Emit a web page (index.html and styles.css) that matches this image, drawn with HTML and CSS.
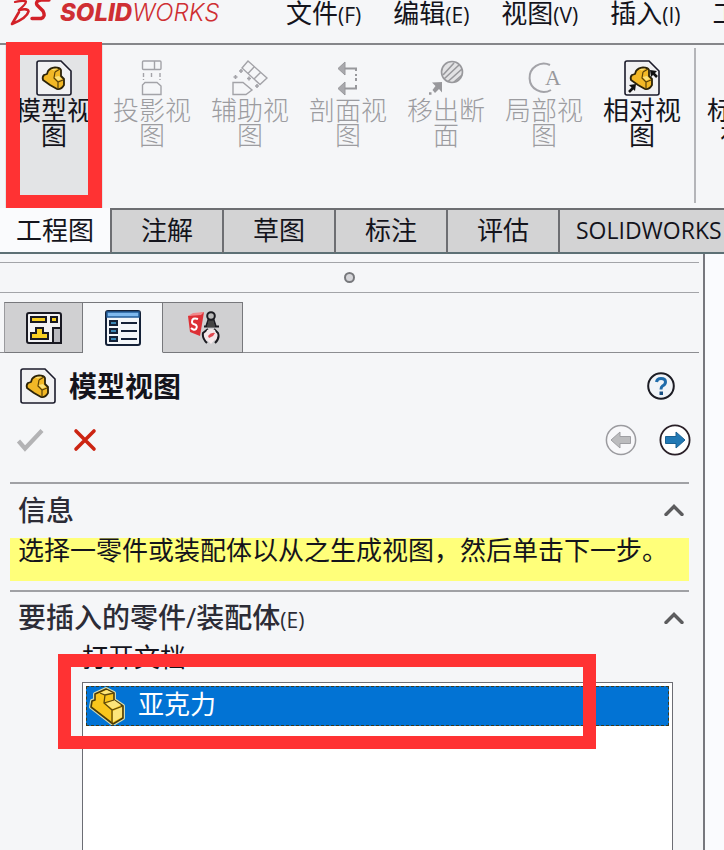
FILE: index.html
```html
<!DOCTYPE html>
<html lang="zh-CN">

<head>
  <meta charset="UTF-8">
  <meta name="viewport" content="width=device-width, initial-scale=1.0">
  <title>SOLIDWORKS - 模型视图</title>
  <link rel="stylesheet" href="styles.css">
</head>

<body>
  <!-- Shared icon shapes -->
  <svg class="sprite" aria-hidden="true">
    <symbol id="model-view" viewBox="0 0 36 36">
      <path d="M3 1H25L35 11V33Q35 35 33 35H3Q1 35 1 33V3Q1 1 3 1Z" fill="#f1f1f3" stroke="#1b1b2b" stroke-width="1.6" />
      <path d="M12 11Q14 8 19 7.500Q24 7.500 25 10V16L28 19V25Q25 30 21 29L14 25L7 20Q6 17 8 15L11 14Z" fill="#f2b826" stroke="#2b2208" stroke-width="1.8" stroke-linejoin="round" />
      <path d="M19 12L24 9M19 12L18 18L22 22L27 20M22 22V28" fill="none" stroke="#5a4208" stroke-width="1.200" />
      <path d="M15 9.500Q18 8 22 8.500L18 10.500ZM18.500 17L23 16L26 19L22 20.500Z" fill="#fbe17a" />
    </symbol>
    <symbol id="chevron" viewBox="0 0 20 12">
      <path d="M2 10.500L10 2.500L18 10.500" fill="none" stroke="#5c5c5e" stroke-width="3.400" stroke-linecap="round" />
    </symbol>
  </svg>

  <header class="title-bar">
    <div class="brand">
      <svg class="brand-mark" viewBox="0 0 42 26" aria-hidden="true">
        <g fill="none" stroke="#d22128" stroke-linecap="round" stroke-linejoin="round">
          <path d="M6 2Q15 0 17 1.500Q17 4 11 9" stroke-width="2.200" />
          <path d="M10 10Q19 8 19.500 11.500Q18 18 3 24L10 12" stroke-width="2.600" />
          <path d="M40 0H32Q26 1 28 5L34 11Q37 17 32 18.500H23" stroke-width="3.400" />
        </g>
      </svg>
      <span class="brand-name"><b>SOLID</b>WORKS</span>
    </div>
    <nav class="menu">
      <a href="#">文件<small>(F)</small></a>
      <a href="#">编辑<small>(E)</small></a>
      <a href="#">视图<small>(V)</small></a>
      <a href="#">插入<small>(I)</small></a>
      <a href="#">工具<small>(T)</small></a>
    </nav>
  </header>

  <div class="ribbon">
    <div class="tool-wrap">
      <button class="tool pressed" type="button">
        <svg class="icon"><use href="#model-view" /></svg>
        <span>模型视图</span>
      </button>
      <div class="callout callout-tool"></div>
    </div>
    <button class="tool" type="button" disabled>
      <svg class="icon" viewBox="0 0 36 36" fill="none" stroke="#a3a3a8" stroke-width="1.400">
        <rect x="8.500" y="1" width="18.500" height="8.500" rx="1" />
        <path d="M20.500 1V9.500M9.500 13V17M17.500 13V17M26 13V17M9.500 19V20M26 19V20" />
        <path d="M11 22.500H23L27 26V34.500H8.500V25Z" />
      </svg>
      <span>投影视图</span>
    </button>
    <button class="tool" type="button" disabled>
      <svg class="icon" viewBox="0 0 36 36" fill="none" stroke="#a3a3a8" stroke-width="1.400">
        <path d="M16 1L35 18L28 24.500L10 8ZM22.500 6.500L16 13.500M29 12L22 19" />
        <path d="M1 22.500H11L20 30L14 34.500H1Z" />
        <path d="M7 11H11M9 9V13M1.500 17H5.500M3.500 15V19M15 18.500H19M17 16.500V20.500M23 26H27M25 24V28" stroke-width="1.600" />
      </svg>
      <span>辅助视图</span>
    </button>
    <button class="tool" type="button" disabled>
      <svg class="icon" viewBox="0 0 36 36" fill="none" stroke="#98989c" stroke-width="2">
        <path d="M14 8.500H26V11M26 14V16M26 18V21M26 25V28.500H14" />
        <path d="M8 8.500L15 2V15ZM8 28.500L15 22V35Z" fill="#a9a9ad" stroke-width="1" />
      </svg>
      <span>剖面视图</span>
    </button>
    <button class="tool" type="button" disabled>
      <svg class="icon" viewBox="0 0 36 36" fill="none" stroke="#98989c" stroke-width="1.600">
        <circle cx="24" cy="12" r="10.500" fill="#e2e2e4" />
        <path d="M15 15L26 3M16 19L31 5M20 21.500L34 9M26 22L34 15" />
        <path d="M4 22.500L14 22V32.500L11 29L7 33L4.500 30L7.500 26Z" fill="#98989c" stroke="none" />
        <path d="M1 33.500H3.500" stroke-width="2.500" />
      </svg>
      <span>移出断面</span>
    </button>
    <button class="tool" type="button" disabled>
      <svg class="icon" viewBox="0 0 36 36">
        <path d="M24 5A14.200 14.200 0 1 0 25 30" fill="none" stroke="#a3a3a8" stroke-width="2" />
        <text class="detail-letter" x="27" y="25" text-anchor="middle">A</text>
      </svg>
      <span>局部视图</span>
    </button>
    <button class="tool" type="button">
      <svg class="icon" viewBox="0 0 36 36">
        <use href="#model-view" width="36" height="36" />
        <path d="M5 32L10 27M33 17L29 13" stroke="#111" stroke-width="2.600" />
        <path d="M12 24L11 31L5 25ZM26 10L33 11L27 17Z" fill="#111" />
      </svg>
      <span>相对视图</span>
    </button>
    <div class="ribbon-divider"></div>
    <button class="tool" type="button">
      <svg class="icon" viewBox="0 0 36 36"></svg>
      <span>标准三视图</span>
    </button>
  </div>

  <nav class="tabs">
    <button class="tab active" type="button">工程图</button>
    <button class="tab" type="button">注解</button>
    <button class="tab" type="button">草图</button>
    <button class="tab" type="button">标注</button>
    <button class="tab" type="button">评估</button>
    <button class="tab addins" type="button">SOLIDWORKS</button>
  </nav>

  <div class="workspace">
    <main class="panel">
      <div class="grip"><span class="grip-dot"></span></div>

      <div class="panel-tabs">
        <button class="panel-tab" type="button" aria-label="特征树">
          <svg class="icon" viewBox="0 0 36 36" stroke="#191922" stroke-width="2">
            <rect x="1" y="3" width="34" height="30" rx="2" fill="#f2f2f4" />
            <path d="M5 7H20V12H5ZM25 7H31V12H25Z" fill="#f8cf22" />
            <path d="M5 29V23H10V18H17V23H22V29Z" fill="#f8cf22" />
            <path d="M27 33V18H35V33Z" fill="#b9b9bf" />
          </svg>
        </button>
        <button class="panel-tab active" type="button" aria-label="属性">
          <svg class="icon" viewBox="0 0 36 36" stroke="#152238" stroke-width="2">
            <rect x="1" y="1" width="34" height="34" rx="2" fill="#f4f7fa" />
            <path d="M2 2H34V7H2Z" fill="#7fb9ee" stroke="#235d9a" stroke-width="1.500" />
            <path d="M5 11H12V15H5ZM5 19H12V23H5ZM5 27H12V31H5Z" fill="#3b87b5" />
            <path d="M16 13H32M16 21H32M16 29H32" stroke-width="1.800" />
          </svg>
        </button>
        <button class="panel-tab" type="button" aria-label="配置">
          <svg class="icon" viewBox="0 0 36 36">
            <path d="M3 6L19 2L15 26L5 22Z" fill="#dd3036" />
            <path d="M3 6L8 3L19 2L16 5Z" fill="#f08a8d" />
            <path d="M13 9Q7 7 7 12Q7 14 10 14.500Q13 16 11 19Q9 21 6 18" fill="none" stroke="#fff" stroke-width="2" />
            <path d="M23 19L18 23Q17 28 22 33M29 19L33 23Q35 28 30 33" fill="#f4e9eb" stroke="#1c1c22" stroke-width="2" />
            <path d="M22 20Q26 18 30 20L32 27L26 34L20 28Z" fill="#f4e9eb" />
            <path d="M23 26Q26 22 30 23L28 26L24 28Z" fill="#e14850" />
            <path d="M19 16.500H34M24 8L21 17M28 8L31 17" stroke="#1c1c22" stroke-width="2" />
            <path d="M24 9H28L30 17H22Z" fill="#444" />
            <circle cx="26" cy="6" r="3.800" fill="#bbb" stroke="#1c1c22" stroke-width="2" />
          </svg>
        </button>
      </div>

      <div class="panel-head">
        <svg class="icon"><use href="#model-view" /></svg>
        <h1>模型视图</h1>
        <button class="icon-btn help" type="button" aria-label="帮助">
          <svg viewBox="0 0 28 28">
            <circle cx="14" cy="14" r="12.800" fill="#f1f4f8" stroke="#1c1c24" stroke-width="2" />
            <path d="M9.500 10Q10 6.500 14 6.500Q18.500 6.500 18.500 10Q18.500 12.500 15.500 14Q14 15 14 17.500" fill="none" stroke="#1f6cab" stroke-width="3" />
            <path d="M12.500 19.500H16V23H12.500Z" fill="#174f83" />
          </svg>
        </button>
      </div>

      <div class="panel-actions">
        <button class="icon-btn" type="button" aria-label="确定" disabled>
          <svg viewBox="0 0 28 24"><path d="M2.500 13L9 20.500L26 2.500" fill="none" stroke="#b3b3b5" stroke-width="4.200" /></svg>
        </button>
        <button class="icon-btn cancel" type="button" aria-label="取消">
          <svg viewBox="0 0 24 24"><path d="M3 3L21 21M21 3L3 21" stroke="#cc2412" stroke-width="3.600" stroke-linecap="round" /></svg>
        </button>
        <button class="icon-btn round back" type="button" aria-label="上一步" disabled>
          <svg viewBox="0 0 32 32">
            <circle cx="16" cy="16" r="14.600" fill="#f8f8fa" stroke="#9b9b9f" stroke-width="1.500" />
            <path d="M6 16L15 8V12.500H25.500V19.500H15V24Z" fill="#bcbcbe" stroke="#9f9fa3" />
          </svg>
        </button>
        <button class="icon-btn round" type="button" aria-label="下一步">
          <svg viewBox="0 0 32 32">
            <circle cx="16" cy="16" r="14.600" fill="#fff" stroke="#2a2028" stroke-width="1.800" />
            <path d="M26 16L17 8V12.500H6.500V19.500H17V24Z" fill="#2279b5" stroke="#1a6192" />
          </svg>
        </button>
      </div>

      <section class="group">
        <button class="group-head" type="button">
          <span>信息</span>
          <svg class="chevron"><use href="#chevron" /></svg>
        </button>
        <p class="message">选择一零件或装配体以从之生成视图，然后单击下一步。</p>
      </section>

      <section class="group parts">
        <button class="group-head" type="button">
          <span>要插入的零件/装配体<small>(E)</small></span>
          <svg class="chevron"><use href="#chevron" /></svg>
        </button>
        <div class="documents">
          <div class="list-label" id="open-docs">打开文档</div>
          <ul class="doc-list" role="listbox" aria-labelledby="open-docs">
            <li class="doc" role="option" aria-selected="true">
              <svg class="part-icon" viewBox="0 0 36 38">
                <path d="M3 14L6 13V7L17 2L25 6V13L34 19V31L24 37L2 20Z" fill="#f6c21c" stroke="#d4dcae" stroke-width="4" stroke-linejoin="round" />
                <path d="M3 14L6 13V7L17 2L25 6V13L34 19V31L24 37L2 20Z" fill="#f9c61c" stroke="#4b3b08" stroke-width="1.600" stroke-linejoin="round" />
                <path d="M11 6L18 3L24 6L16 8ZM24 24L33 20V30L24 35ZM17 17L25 13L32 18L24 22Z" fill="#fde57a" />
                <path d="M11 6L16 8L25 6M16 8L15 16L23 23L34 19M23 23V36M15 16L25 13" fill="none" stroke="#5d490c" stroke-width="1.300" />
              </svg>
              <span>亚克力</span>
            </li>
          </ul>
          <div class="callout callout-doc"></div>
        </div>
      </section>
    </main>
    <div class="canvas"></div>
  </div>
</body>

</html>
```

FILE: styles.css
```css
* {
  box-sizing: border-box;
}

body {
  margin: 0;
  height: 100vh;
  display: flex;
  flex-direction: column;
  overflow: hidden;
  background: #f5f6f8;
  color: #14141c;
  font-family: "Open Sans", "Noto Sans CJK SC", sans-serif;
  font-size: 26px;
  line-height: 32px;
}

button {
  padding: 0;
  border: none;
  background: none;
  color: inherit;
  font: inherit;
  cursor: pointer;
}

small {
  font-size: 21px;
}

.sprite {
  display: none;
}

.icon {
  display: block;
  flex: none;
  width: 36px;
  height: 36px;
}

/* Title bar */
.title-bar {
  display: flex;
  flex: none;
  height: 45px;
  padding-left: 9px;
  border-bottom: 2px solid #85868a;
  overflow: hidden;
  white-space: nowrap;
}

.brand {
  display: flex;
  flex: none;
  gap: 9px;
  width: 277px;
}

.brand-mark {
  width: 42px;
  height: 26px;
}

.brand-name {
  color: #cf2f33;
  font-family: Inter, sans-serif;
  font-size: 24px;
  font-style: italic;
  font-weight: 300;
  line-height: 26px;
}

.brand-name b {
  font-weight: 800;
}

.menu {
  display: flex;
  gap: 32px;
  line-height: 26px;
}

.menu a {
  color: inherit;
  text-decoration: none;
}

/* Ribbon */
.ribbon {
  display: flex;
  flex: none;
  height: 163px;
  padding-left: 5px;
  overflow-x: clip;
}

.tool-wrap {
  position: relative;
  flex: none;
}

.tool {
  display: flex;
  flex: none;
  flex-direction: column;
  align-items: center;
  gap: 2px;
  width: 98px;
  height: 100%;
  padding: 15px 8px 0;
  line-height: 25px;
}

.tool span {
  width: 80px;
}

.tool:disabled {
  color: #9c9ca0;
  font-weight: 300;
}

.tool.pressed {
  background: #e3e4e6;
}

.detail-letter {
  fill: #98989c;
  font: 22px "Liberation Serif", serif;
}

.ribbon-divider {
  flex: none;
  width: 2px;
  margin: 3px 1px 5px 3px;
  background: #b4b5b9;
}

.callout {
  position: absolute;
  border: 13px solid #ff3233;
  pointer-events: none;
}

.callout-tool {
  inset: -3px 1px 0;
  border-width: 13px 14px;
}

.callout-doc {
  top: 10px;
  right: 77px;
  left: -24px;
  height: 95px;
}

/* Command tabs */
.tabs {
  display: flex;
  flex: none;
  height: 46px;
}

.tab {
  flex: none;
  width: 112px;
  padding-bottom: 2px;
  border: solid #6d6e72;
  border-width: 2px 0 2px 2px;
  border-bottom-color: #5d7075;
  background: #d3d3d4;
  white-space: nowrap;
}

.tab.active {
  width: 110px;
  border-top-color: transparent;
  border-left: none;
  background: #fafbfd;
}

.tab.addins {
  flex: 1;
  min-width: 0;
  padding-left: 16px;
  font-size: 23px;
  text-align: left;
}

/* Property panel */
.workspace {
  display: flex;
  flex: 1;
  min-height: 0;
}

.panel {
  display: flex;
  flex: 1;
  flex-direction: column;
  padding: 8px 4px 0 0;
  border-right: 2px solid #77787e;
}

.canvas {
  width: 19px;
  background: #fafbfe;
}

.grip {
  display: flex;
  flex: none;
  align-items: center;
  justify-content: center;
  height: 31px;
  border: solid #a3a4a8;
  border-width: 1px 0;
}

.grip-dot {
  width: 11px;
  height: 11px;
  border: 2px solid #77787c;
  border-radius: 50%;
  background: #d6d6da;
}

.panel-tabs {
  display: flex;
  flex: none;
  height: 60px;
  padding: 9px 0 0 4px;
  border-bottom: 1px solid #8c8d91;
}

.panel-tab {
  display: flex;
  align-items: center;
  justify-content: center;
  width: 80px;
  height: 51px;
  border: 1px solid #77787c;
  border-left: none;
  background: #d0d0d2;
}

.panel-tab:first-child {
  width: 79px;
  border-left: 1px solid #9a9a9e;
}

.panel-tab.active {
  border-bottom-color: #f5f6f8;
  background: #f5f6f8;
}

.panel-head {
  display: flex;
  align-items: center;
  gap: 13px;
  padding: 15px 24px 0 20px;
}

.panel-head h1 {
  margin: 0;
  font-size: 28px;
  font-weight: 700;
  line-height: 36px;
}

.icon-btn svg {
  display: block;
  width: 28px;
  height: 24px;
}

.help {
  margin-left: auto;
}

.icon-btn.help svg {
  height: 28px;
}

.panel-actions {
  display: flex;
  align-items: center;
  padding: 20px 8px 26px 16px;
}

.cancel {
  margin-left: 27px;
}

.back {
  margin-right: 22px;
  margin-left: auto;
}

.icon-btn.round svg {
  width: 32px;
  height: 32px;
}

.group {
  margin: 0 10px;
  padding-bottom: 9px;
  border-top: 2px solid #a0a1a5;
}

.group-head {
  display: flex;
  align-items: center;
  justify-content: space-between;
  width: 100%;
  height: 54px;
  padding: 0 5px 2px 8px;
  color: #2c2c36;
  font-size: 28px;
  font-weight: 500;
}

.group-head small {
  font-weight: 400;
}

.chevron {
  width: 20px;
  height: 12px;
}

.message {
  margin: 0;
  height: 43px;
  padding-left: 8px;
  background: #ffff7a;
  line-height: 24px;
  white-space: nowrap;
}

.parts {
  display: flex;
  flex: 1;
  flex-direction: column;
  padding-bottom: 0;
}

.parts .group-head {
  flex: none;
  height: 52px;
  padding-bottom: 0;
}

.documents {
  position: relative;
  display: flex;
  flex: 1;
  flex-direction: column;
  margin: 0 16px 0 72px;
}

.list-label {
  height: 38px;
  line-height: 26px;
}

.doc-list {
  flex: 1;
  margin: 0;
  padding: 3px;
  border: solid #6c6d74;
  border-width: 1px 1px 0;
  background: #fff;
  list-style: none;
}

.doc {
  display: flex;
  align-items: center;
  gap: 13px;
  height: 40px;
  padding-left: 2px;
  border: 1px dashed #3d3a1c;
  background: #0273d4;
  color: #fff;
  line-height: 28px;
}

.doc span {
  padding-bottom: 4px;
}

.part-icon {
  width: 36px;
  height: 38px;
}
```
